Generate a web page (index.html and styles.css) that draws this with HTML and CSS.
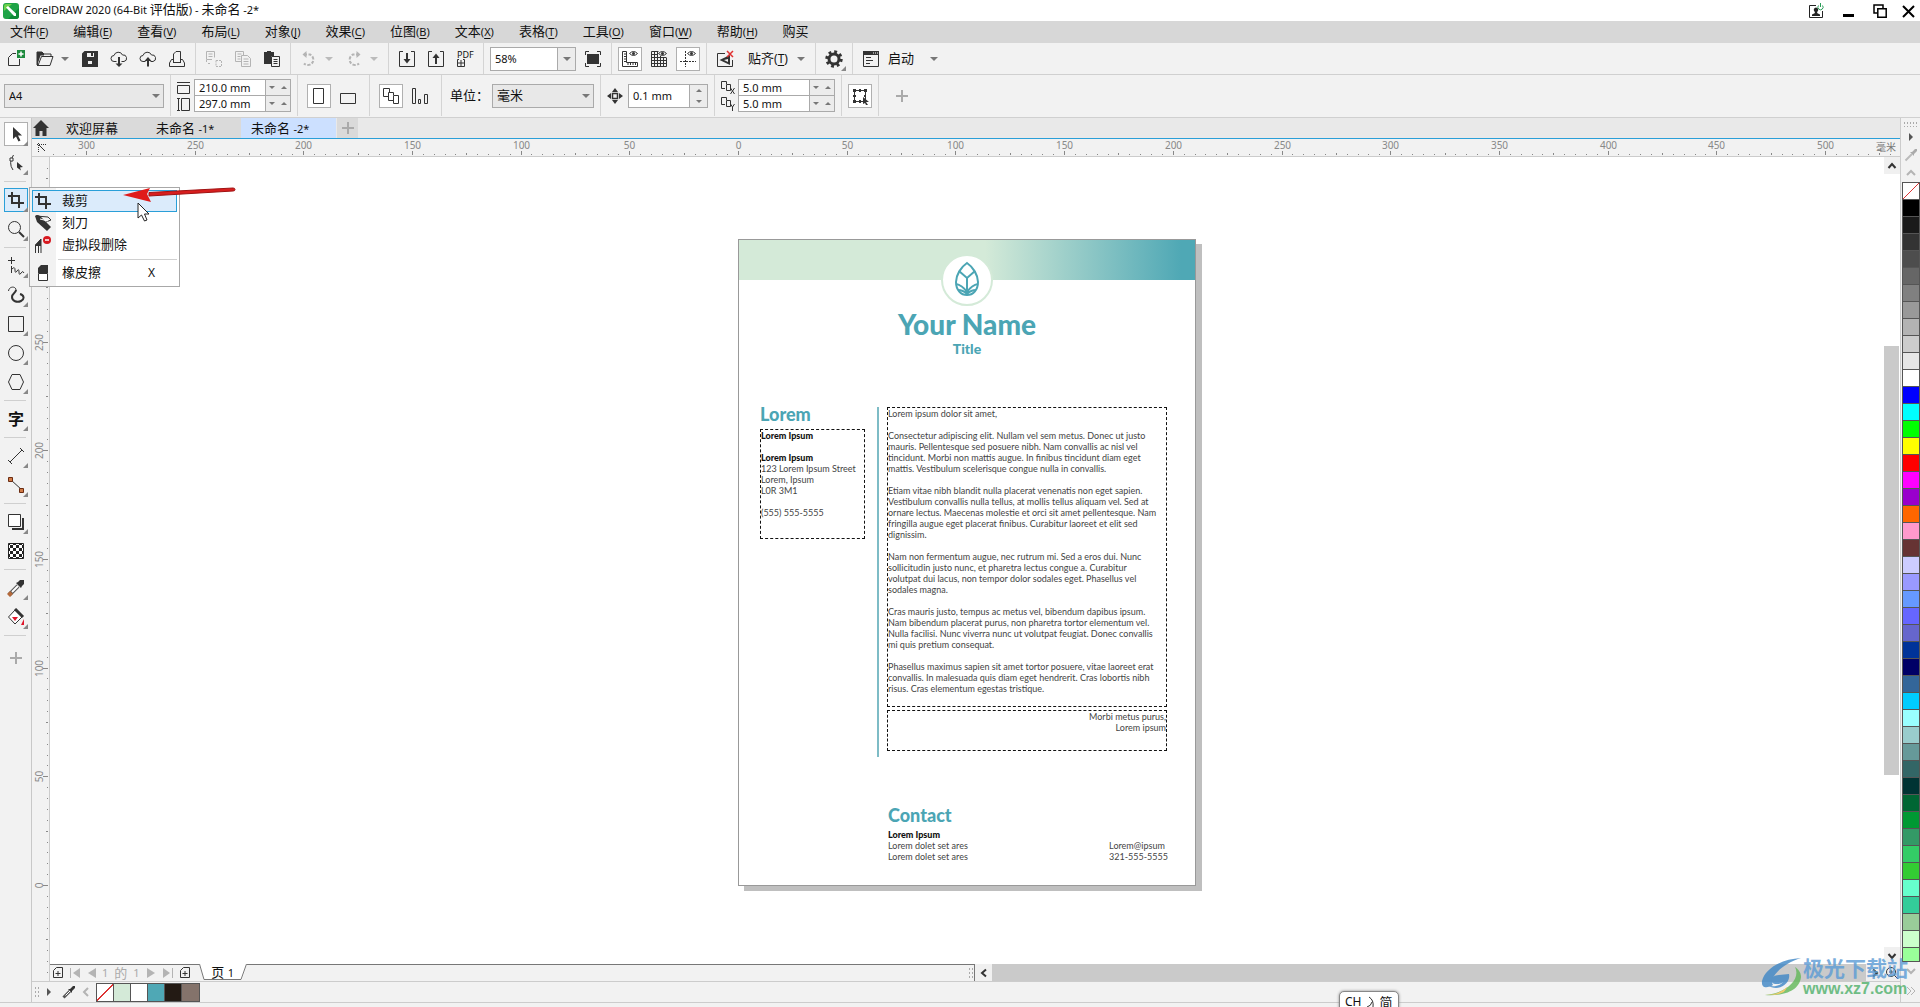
FILE: index.html
```html
<!DOCTYPE html>
<html lang="zh-CN">
<head>
<meta charset="utf-8">
<title>CorelDRAW 2020 (64-Bit 评估版) - 未命名 -2*</title>
<link rel="stylesheet" href="styles.css">
</head>
<body>
<header class="titlebar">
  <svg class="app-logo" viewBox="0 0 16 16" width="16" height="16"><rect width="16" height="16" rx="3" fill="#1fa347"/><path d="M16 5v8a3 3 0 0 1-3 3H5z" fill="#0f8a38"/><path d="M1 3a2 2 0 0 1 2-2h6L1 8z" fill="#6fd04b"/><path d="M3 4.500 5 3l8 7.500v2.500h-2z" fill="#fff"/></svg>
  <h1 class="app-title">CorelDRAW 2020 (64-Bit <span class="zh">评估版</span>) - <span class="zh">未命名</span> -2*</h1>
  <div class="window-buttons">
    <button class="win-btn" aria-label="账户"><svg width="16" height="16" viewBox="0 0 16 16"><path d="M8 2.500H1.500v12h13V8" fill="none" stroke="#222"/><path d="M8 4.500a2.300 2.300 0 0 1 1.500 4l-.5 1.500 3 1.500v1.500H4v-1.500L7 10l-.5-1.500A2.300 2.300 0 0 1 8 4.500z" fill="#222"/><path d="M10.500 2.500a2.600 2.600 0 1 0 4 0M12.500 0v4" fill="none" stroke="#2a9d57"/></svg></button>
    <button class="win-btn" aria-label="最小化"><svg width="16" height="16" viewBox="0 0 16 16"><path d="M3 11h11v3H3z"/></svg></button>
    <button class="win-btn" aria-label="还原"><svg width="16" height="16" viewBox="0 0 16 16" fill="none" stroke="#000" stroke-width="1.500"><path d="M5.500 10H2V2h9v3.500"/><path d="M5.800 5.800h8.400v8.400H5.800z"/></svg></button>
    <button class="win-btn" aria-label="关闭"><svg width="16" height="16" viewBox="0 0 16 16"><path d="M3 3l11 11M14 3 3 14" stroke="#000" stroke-width="2"/></svg></button>
  </div>
</header>

<nav class="menubar">
  <button>文件<span class="key">(<u>F</u>)</span></button>
  <button>编辑<span class="key">(<u>E</u>)</span></button>
  <button>查看<span class="key">(<u>V</u>)</span></button>
  <button>布局<span class="key">(<u>L</u>)</span></button>
  <button>对象<span class="key">(<u>J</u>)</span></button>
  <button>效果<span class="key">(<u>C</u>)</span></button>
  <button>位图<span class="key">(<u>B</u>)</span></button>
  <button>文本<span class="key">(<u>X</u>)</span></button>
  <button>表格<span class="key">(<u>T</u>)</span></button>
  <button>工具<span class="key">(<u>O</u>)</span></button>
  <button>窗口<span class="key">(<u>W</u>)</span></button>
  <button>帮助<span class="key">(<u>H</u>)</span></button>
  <button>购买</button>
</nav>

<div class="toolbar">
  <button class="tool" aria-label="新建"><svg viewBox="0 0 18 18" width="18" height="18"><path d="M9 3.500H5.500l-4 4v8h11V9" class="ln"/><path d="M10 0h8v8h-8z" fill="#1d8a3d"/><path d="M14 1.500v5M11.500 4h5" stroke="#fff" stroke-width="1.500"/></svg></button>
  <div class="split">
    <button class="tool" aria-label="打开"><svg viewBox="0 0 18 18" width="18" height="18"><path d="M1 15V2h5l2 2h7v2.500" class="ln"/><path d="M2 15.500 5.500 6.500h11.500L14 15.500z" class="ln"/><path d="M1 2h5l2 2v1.500H4.500L2 13v3H1z" class="fl"/></svg></button>
    <button class="drop" aria-label="打开最近"><i class="caret"></i></button>
  </div>
  <button class="tool" aria-label="保存"><svg viewBox="0 0 18 18" width="18" height="18"><path d="M3.500 1H17v16H1V3.500zM6 3v4h7V3zM7 11h4v3H7z" class="fl" fill-rule="evenodd"/><path d="M10 3h2v3h-2z" class="fl"/></svg></button>
  <button class="tool" aria-label="从云端打开"><svg viewBox="0 0 18 18" width="18" height="18"><path d="M6.500 11.500H4a3 3 0 0 1 0-6A4.500 4.500 0 0 1 12.500 5a3.200 3.200 0 0 1 1.500 6.500h-2.500" class="ln"/><path d="M9 7v8" class="ln2"/><path d="M5.500 13.500h7L9 17z" class="fl"/></svg></button>
  <button class="tool" aria-label="保存到云端"><svg viewBox="0 0 18 18" width="18" height="18"><path d="M6.500 11.500H4a3 3 0 0 1 0-6A4.500 4.500 0 0 1 12.500 5a3.200 3.200 0 0 1 1.500 6.500h-2.500" class="ln"/><path d="M9 10v6.500" class="ln2"/><path d="M5.500 11h7L9 7z" class="fl"/></svg></button>
  <button class="tool" aria-label="打印"><svg viewBox="0 0 18 18" width="18" height="18"><path d="M5.500 12.500V4L8 1.500h4.500v11" class="ln"/><path d="M5 9.500H3.500l-2 3.500v3.500h15V13l-2-3.500H13M5 12.500h8" class="ln"/></svg></button>
  <hr class="sep">
  <button class="tool off" aria-label="剪切"><svg viewBox="0 0 18 18" width="18" height="18"><path d="M7 9.500H1.500v-8h8v6" class="ln"/><path d="M3.500 4h4M3.500 6.500h4" class="ln"/><path d="M1.500 10v3M3 13.500h3M11 10.500h5.500v6H11z" class="ln" stroke-dasharray="2 1"/></svg></button>
  <button class="tool off" aria-label="复制"><svg viewBox="0 0 18 18" width="18" height="18"><path d="M7 11.500H1.500v-10h8V5M3.500 4h4M3.500 6.500h3M3.500 9h3M7.500 5.500h6l3 3v8h-9zM9.500 9h5M9.500 11.500h5M9.500 14h5" class="ln"/></svg></button>
  <button class="tool" aria-label="粘贴"><svg viewBox="0 0 18 18" width="18" height="18"><path d="M1 2h3V1h4v1h3v4H8v8H1z" class="fl"/><path d="M8.500 6.500h8v10h-8zM10.500 9.500h4M10.500 11.500h4M10.500 13.500h4" class="ln"/></svg></button>
  <hr class="sep">
  <div class="split">
    <button class="tool off" aria-label="撤消"><svg viewBox="0 0 18 18" width="18" height="18"><path d="M4 4.500h6a5.500 5.500 0 1 1-6 9" class="ln2" stroke-dasharray="3 1.500"/><path d="M6.500 1v7L2.500 4.500z" class="fl"/></svg></button>
    <button class="drop off" aria-label="撤消列表"><i class="caret"></i></button>
  </div>
  <div class="split">
    <button class="tool off" aria-label="重做"><svg viewBox="0 0 18 18" width="18" height="18"><path d="M14 4.500H8a5.500 5.500 0 1 0 6 9" class="ln2" stroke-dasharray="3 1.500"/><path d="M11.500 1v7l4-3.500z" class="fl"/></svg></button>
    <button class="drop off" aria-label="重做列表"><i class="caret"></i></button>
  </div>
  <hr class="sep">
  <button class="tool" aria-label="导入"><svg viewBox="0 0 18 18" width="18" height="18"><path d="M5 1.500H1.500v15h15v-15H13" class="ln"/><path d="M9 3v8" class="ln2"/><path d="M5.500 9h7L9 13.500z" class="fl"/></svg></button>
  <button class="tool" aria-label="导出"><svg viewBox="0 0 18 18" width="18" height="18"><path d="M5 1.500H1.500v15h15v-15H13" class="ln"/><path d="M9 6v8" class="ln2"/><path d="M5.500 8h7L9 3.500z" class="fl"/></svg></button>
  <button class="tool pdf" aria-label="发布为 PDF"><span>PDF</span><svg viewBox="0 0 8 8" width="8" height="8"><path d="M2 .5H.5v7h7v-7H6M4 1v6M1 4h6" class="ln"/></svg></button>
  <hr class="sep">
  <div class="combo zoom"><input type="text" value="58%" aria-label="缩放级别"><button aria-label="缩放列表"><i class="caret"></i></button></div>
  <button class="tool" aria-label="全屏预览"><svg viewBox="0 0 18 18" width="18" height="18"><path d="M3 4h12v10H3z" class="fl"/><path d="M1.500 5V1.500H5M13 1.500h3.500V5M1.500 13v3.500H5M13 16.500h3.500V13" class="ln"/></svg></button>
  <hr class="sep">
  <button class="tool on" aria-label="显示标尺"><svg viewBox="0 0 18 18" width="18" height="18"><path d="M1.500 1.500h4v11h11v4h-15zM5 4H3M5 6.500H3M5 9H3M5 11.500H3M7 13v2M9.500 13v2M12 13v2M14.500 13v2" class="ln"/><path d="M8.500 3.500q4-4 8 0q-4 4-8 0z" class="ln"/><circle cx="12.500" cy="3.500" r="1.500" class="fl"/></svg></button>
  <button class="tool" aria-label="显示网格"><svg viewBox="0 0 18 18" width="18" height="18"><path d="M1.500 1.500h7M1.500 1.500v15h15v-9M4.500 2v14M7.500 2v14M10.500 6v10M13.500 7v9M2 4.500h6M2 7.500h14M2 10.500h14M2 13.500h14" class="ln"/><path d="M8.500 3.500q4-4 8 0q-4 4-8 0z" class="ln"/><circle cx="12.500" cy="3.500" r="1.500" class="fl"/></svg></button>
  <button class="tool on" aria-label="显示辅助线"><svg viewBox="0 0 18 18" width="18" height="18"><path d="M6.500 1v16M1 11.500h16" class="ln" stroke-dasharray="2 1"/><path d="M8.500 3.500q4-4 8 0q-4 4-8 0z" class="ln"/><circle cx="12.500" cy="3.500" r="1.500" class="fl"/></svg></button>
  <hr class="sep">
  <button class="tool" aria-label="关闭贴齐"><svg viewBox="0 0 18 18" width="18" height="18"><path d="M9 3.500H1.500v13h15V10" class="ln"/><path d="M14 5v10L3.500 10z" class="fl"/><path d="M12 9v3l-4-2z" fill="#f2f2f2"/><path d="M11 1l6 6M17 1l-6 6" stroke="#e03030" stroke-width="1.500"/></svg></button>
  <button class="text-tool"><span class="zh">贴齐</span>(<u>T</u>)</button>
  <button class="drop snug" aria-label="贴齐选项"><i class="caret"></i></button>
  <hr class="sep">
  <button class="tool fly" aria-label="选项"><svg viewBox="0 0 18 18" width="18" height="18"><circle cx="9" cy="9" r="5" fill="none" stroke="#333" stroke-width="3"/><circle cx="9" cy="9" r="7.200" fill="none" stroke="#333" stroke-width="3" stroke-dasharray="2.800 2.850"/></svg></button>
  <hr class="sep">
  <button class="tool" aria-label="应用程序启动器"><svg viewBox="0 0 18 18" width="18" height="18"><path d="M1.500 1.500h15v15h-15z" class="ln"/><path d="M1 1h16v4H1z" class="fl"/><path d="M4 7.500h5M4 10.500h7M4 13.500h4" class="ln"/><path d="M11 3h1M13 3h1M15 3h1" stroke="#fff"/></svg></button>
  <button class="text-tool launch-label"><span class="zh">启动</span></button>
  <button class="drop launch" aria-label="启动列表"><i class="caret"></i></button>
</div>

<div class="toolbar property">
  <div class="select paper"><select aria-label="页面大小"><option>A4</option></select><i class="caret"></i></div>
  <hr class="sep">
  <div class="dims">
    <svg viewBox="0 0 13 32" width="13" height="32"><path d="M0 2.500h13M.5 5.500h12v8H.5zM4.500 18.500h8v12h-8zM1.500 18v13M0 18.500h3M0 30.500h3" class="ln"/></svg>
    <div class="stack">
      <div class="spin"><input type="text" value="210.0 mm" aria-label="页面宽度"><button aria-label="宽度微调"><i class="caret small"></i><i class="caret small up"></i></button></div>
      <div class="spin"><input type="text" value="297.0 mm" aria-label="页面高度"><button aria-label="高度微调"><i class="caret small"></i><i class="caret small up"></i></button></div>
    </div>
  </div>
  <hr class="sep">
  <div class="pair">
    <button class="tool on" aria-label="纵向"><svg viewBox="0 0 18 18" width="18" height="18"><path d="M3.500 1.500h10v15h-10z" class="ln"/></svg></button>
    <button class="tool" aria-label="横向"><svg viewBox="0 0 18 18" width="18" height="18"><path d="M1.500 6.500h15v10h-15z" class="ln"/></svg></button>
  </div>
  <hr class="sep">
  <div class="pair">
    <button class="tool on" aria-label="所有页面"><svg viewBox="0 0 18 18" width="18" height="18"><path d="M6 9.500H1.500v-8h6V5M11 13.500H6.500v-8h5V8M11.500 8.500h5v8h-5z" class="ln"/></svg></button>
    <button class="tool" aria-label="当前页面"><svg viewBox="0 0 18 18" width="18" height="18"><path d="M1.500 1.500h3v15h-3zM7.500 12.500h2v4h-2zM13.500 7.500h3v9h-3z" class="ln"/></svg></button>
  </div>
  <hr class="sep">
  <label class="unit-label" for="unit">单位：</label>
  <div class="select unit"><select id="unit"><option>毫米</option></select><i class="caret"></i></div>
  <hr class="sep">
  <div class="nudge">
    <svg viewBox="0 0 16 16" width="16" height="16"><path d="M5.500 5.500h5v5h-5z" fill="none" stroke="#333" stroke-width="1.500"/><path d="M8 0l3 4H5zM8 16l3-4H5zM0 8l4-3v6zM16 8l-4-3v6z" class="fl"/></svg>
    <div class="combo step"><input type="text" value="0.1 mm" aria-label="微调距离"><button aria-label="微调"><i class="caret small up"></i><i class="caret small"></i></button></div>
  </div>
  <hr class="sep">
  <div class="dims dup">
    <svg viewBox="0 0 15 32" width="15" height="32"><path d="M4 8.500H.5v-7h5V4M5.500 4.500h4v6h-4zM9.500 8l4 6M13.500 8l-4 6M4 24.500H.5v-7h5V20M5.500 20.500h4v6h-4zM9.500 24l2 3 2-3M11.500 27v4" class="ln"/></svg>
    <div class="stack">
      <div class="spin"><input type="text" value="5.0 mm" aria-label="再制距离 X"><button aria-label="X 微调"><i class="caret small"></i><i class="caret small up"></i></button></div>
      <div class="spin"><input type="text" value="5.0 mm" aria-label="再制距离 Y"><button aria-label="Y 微调"><i class="caret small"></i><i class="caret small up"></i></button></div>
    </div>
  </div>
  <hr class="sep">
  <button class="tool on" aria-label="视为已填充"><svg viewBox="0 0 18 18" width="18" height="18"><path d="M3.500 3.500h11v11h-11z" class="ln"/><path d="M2 2h3v3H2zM8 2h2v3H8zM13 2h3v3h-3zM2 8h3v2H2zM2 13h3v3H2zM8 13h2v3H8zM13 8h2v2h-2zM12 10l6 5h-3l2 3-2 0-1-2-2 1z" class="fl"/></svg></button>
  <hr class="sep">
  <div class="pair custom"><button class="tool" aria-label="自定义"><svg viewBox="0 0 18 18" width="18" height="18"><path d="M9 3v12M3 9h12" stroke="#aaa" stroke-width="2"/></svg></button></div>
</div>

<div class="workspace">
  <aside class="toolbox">
    <button class="tool on fly" aria-label="选择"><svg viewBox="0 0 18 18" width="18" height="18"><path d="M6 2v12l3-2.500 2.500 5 2-1-2.500-5h4z" class="fl"/></svg></button>
    <button class="tool fly" aria-label="形状"><svg viewBox="0 0 18 18" width="18" height="18"><path d="M6.500 1Q1 9 6 16" class="ln"/><path d="M3 4h3v3H3z" fill="#fff" class="ln"/><path d="M10 8l6 5-3 .5 1 3-4-3z" class="fl"/></svg></button>
    <hr class="rule">
    <div class="flyout-anchor">
      <button class="tool hot fly" aria-label="裁剪工具"><svg viewBox="0 0 18 18" width="18" height="18"><path d="M5 1v11h12M1 5h11v12" class="ln2"/></svg></button>
      <div class="flyout" role="menu">
        <button class="item hot" role="menuitem"><svg viewBox="0 0 18 18" width="18" height="18"><path d="M5 1v11h12M1 5h11v12" class="ln2"/></svg><span>裁剪</span></button>
        <button class="item" role="menuitem"><svg viewBox="0 0 18 18" width="18" height="18"><path d="M2 2l12 1 3 3-5 2" class="ln"/><path d="M1 2q2-2 5 0l11 11-4 4L3 8z" class="fl"/><path d="M6 5l8 2" stroke="#fff"/></svg><span>刻刀</span></button>
        <button class="item" role="menuitem"><svg viewBox="0 0 18 18" width="18" height="18"><path d="M1.500 17V9L7 3v14M4.500 9v8M1 9.500h6" class="ln"/><path d="M1 9l6-6v6z" class="fl"/><circle cx="13" cy="4" r="4" fill="#d71920"/><path d="M11 4h4" stroke="#fff" stroke-width="1.500"/></svg><span>虚拟段删除</span></button>
        <hr class="item-rule">
        <button class="item" role="menuitem"><svg viewBox="0 0 18 18" width="18" height="18"><path d="M4 9V4l3-3h7v8z" class="fl"/><path d="M4.500 9.500h9v7h-9z" fill="#fff" class="ln"/></svg><span>橡皮擦</span><kbd>X</kbd></button>
        <svg class="pointer-arrow" viewBox="0 0 118 20" width="118" height="20"><path d="M26 8.500 110 4q2 0 2 1.500T110 7L26 12z" fill="#d81e1e" stroke="#a01212"/><path d="M0 11 27 4l-3 6 4 8z" fill="#e01b1b"/></svg>
        <svg class="cursor" viewBox="0 0 14 20" width="14" height="20"><path d="M1 1v15l3.500-3 3 6 2.500-1-2.500-6H12z" fill="#fff" stroke="#222"/></svg>
      </div>
    </div>
    <button class="tool fly" aria-label="缩放"><svg viewBox="0 0 18 18" width="18" height="18"><circle cx="7.500" cy="7.500" r="6" class="ln"/><path d="M12 12l5 5" class="ln2"/></svg></button>
    <hr class="rule">
    <button class="tool fly" aria-label="手绘"><svg viewBox="0 0 18 18" width="18" height="18"><path d="M4.500 0v7M1 3.500h7M4.500 9v7M5 12q3-3 3 1t2 1 2 1 2 1 3 0" class="ln"/></svg></button>
    <button class="tool fly" aria-label="艺术笔"><svg viewBox="0 0 18 18" width="18" height="18"><path d="M1.500 5C2 0 9 0 9 4" class="ln"/><path d="M9 4c0 3-4 3-4 7s5 6 9 4 3-6-1-7" class="ln2"/></svg></button>
    <button class="tool fly" aria-label="矩形"><svg viewBox="0 0 18 18" width="18" height="18"><path d="M1.500 1.500h15v15h-15z" class="ln"/></svg></button>
    <button class="tool fly" aria-label="椭圆形"><svg viewBox="0 0 18 18" width="18" height="18"><circle cx="9" cy="9" r="7.500" class="ln"/></svg></button>
    <button class="tool fly" aria-label="多边形"><svg viewBox="0 0 18 18" width="18" height="18"><path d="M5 1.500h8L16.500 9 13 16.500H5L1.500 9z" class="ln"/></svg></button>
    <hr class="rule">
    <button class="tool fly glyph" aria-label="文本">字</button>
    <hr class="rule">
    <button class="tool fly" aria-label="平行度量"><svg viewBox="0 0 18 18" width="18" height="18"><path d="M3 15 15 3M1 13l4 4M13 1l4 4" class="ln"/></svg></button>
    <button class="tool fly" aria-label="连接器"><svg viewBox="0 0 18 18" width="18" height="18"><path d="M4 4l11 10" class="ln"/><path d="M1.500 1.500h4v4h-4zM12.500 12.500h4v4h-4z" fill="#d07a45" stroke="#6b2c12"/></svg></button>
    <hr class="rule">
    <button class="tool fly" aria-label="阴影"><svg viewBox="0 0 18 18" width="18" height="18"><path d="M1.500 1.500h12v12h-12z" fill="#fff" class="ln"/><path d="M5 16h11V5" class="ln2"/></svg></button>
    <button class="tool" aria-label="透明度"><svg viewBox="0 0 18 18" width="18" height="18"><defs><pattern id="chk" width="6" height="6" patternUnits="userSpaceOnUse"><path d="M0 0h6v6H0z" fill="#fff"/><path d="M0 0h3v3H0zM3 3h3v3H3z" fill="#222"/></pattern></defs><path d="M1.500 1.500h15v15h-15z" fill="url(#chk)" stroke="#222"/></svg></button>
    <hr class="rule">
    <button class="tool fly" aria-label="颜色滴管"><svg viewBox="0 0 18 18" width="18" height="18"><path d="M2 16 11 7" stroke="#555" stroke-width="4"/><path d="M5 13l6-6" stroke="#fff" stroke-width="2"/><path d="M1.500 16.500l3-3" stroke="#b4693a" stroke-width="4"/><path d="M9 4l2-1 2-2 4 0 0 4-2 2-1 2z" class="fl"/></svg></button>
    <button class="tool fly" aria-label="交互式填充"><svg viewBox="0 0 18 18" width="18" height="18"><path d="M1.500 9 8 2l7 7-7 7z" fill="#fff" class="ln"/><path d="M8 1l8 8" stroke="#333" stroke-width="3"/><path d="M5 9h6l-3 4z" fill="#e0162b"/><path d="M17 11v6h-3z" fill="#e0162b"/></svg></button>
    <hr class="rule">
    <button class="tool add-tool" aria-label="快速自定义"><svg viewBox="0 0 18 18" width="18" height="18"><path d="M9 3v12M3 9h12" stroke="#aaa" stroke-width="2"/></svg></button>
  </aside>

  <main class="document">
    <div class="tabs">
      <button class="home" aria-label="主页"><svg viewBox="0 0 18 18" width="18" height="18"><path d="M9 1l8 8h-2.500v8h-4v-5h-3v5h-4V9H1z" class="fl"/></svg></button>
      <button class="tab welcome">欢迎屏幕</button>
      <button class="tab">未命名 <span class="key">-1*</span></button>
      <button class="tab active">未命名 <span class="key">-2*</span></button>
      <button class="add" aria-label="新建文档"><svg viewBox="0 0 12 12" width="12" height="12"><path d="M6 0v12M0 6h12" stroke="#aaa" stroke-width="2"/></svg></button>
    </div>
    <div class="ruler-top">
      <svg class="origin" viewBox="0 0 18 17" width="18" height="17"><path d="M5 5.500h9M6.500 4v9" class="ln" stroke-dasharray="1 1"/><path d="M7 6l6 6" class="ln"/></svg>
      <svg class="scale" id="hruler" height="17"></svg>
      <span class="unit-name">毫米</span>
    </div>
    <div class="stage">
      <svg class="ruler-left" id="vruler" width="18"></svg>
      <div class="view">
        <div class="canvas">
          <article class="sheet">
            <div class="band"><svg class="emblem" viewBox="0 0 52 52" width="52" height="52"><circle cx="26" cy="26" r="25" fill="#fff" stroke="#d4ead8" stroke-width="2"/><g fill="none" stroke="#4ba5b4" stroke-width="2"><path d="M26 9c-6 4-11 12-11 19 0 8 5 13 11 13s11-5 11-13c0-7-5-15-11-19z"/><path d="M18 17l8 7 8-7M26 24v15M15 30q6 1 11 8 5-7 11-8M17 36q5 0 9 4 4-4 9-4"/></g></svg></div>
            <h2 class="name">Your Name</h2>
            <p class="role">Title</p>
            <div class="letter">
              <section class="side">
                <h3>Lorem</h3>
                <div class="frame address"><b>Lorem Ipsum</b>

<b>Lorem Ipsum</b>
123 Lorem Ipsum Street
Lorem, Ipsum
L0R 3M1

(555) 555-5555</div>
              </section>
              <section class="main">
                <div class="frame text">Lorem ipsum dolor sit amet,

Consectetur adipiscing elit. Nullam vel sem metus. Donec ut justo
mauris. Pellentesque sed posuere nibh. Nam convallis ac nisl vel
tincidunt. Morbi non mattis augue. In finibus tincidunt diam eget
mattis. Vestibulum scelerisque congue nulla in convallis.

Etiam vitae nibh blandit nulla placerat venenatis non eget sapien.
Vestibulum convallis nulla tellus, at mollis tellus aliquam vel. Sed at
ornare lectus. Maecenas molestie et orci sit amet pellentesque. Nam
fringilla augue eget placerat finibus. Curabitur laoreet et elit sed
dignissim.

Nam non fermentum augue, nec rutrum mi. Sed a eros dui. Nunc
sollicitudin justo nunc, et pharetra lectus congue a. Curabitur
volutpat dui lacus, non tempor dolor sodales eget. Phasellus vel
sodales magna.

Cras mauris justo, tempus ac metus vel, bibendum dapibus ipsum.
Nam bibendum placerat purus, non pharetra tortor elementum vel.
Nulla facilisi. Nunc viverra nunc ut volutpat feugiat. Donec convallis
mi quis pretium consequat.

Phasellus maximus sapien sit amet tortor posuere, vitae laoreet erat
convallis. In malesuada quis diam eget hendrerit. Cras lobortis nibh
risus. Cras elementum egestas tristique.</div>
                <div class="frame sign">Morbi metus purus,
Lorem ipsum</div>
              </section>
            </div>
            <footer class="contact">
              <h3>Contact</h3>
              <div class="contact-row">
                <p><b>Lorem Ipsum</b>
Lorem dolet set ares
Lorem dolet set ares</p>
                <p>Lorem@ipsum
321-555-5555</p>
              </div>
            </footer>
          </article>
        </div>
        <div class="vscroll">
          <button aria-label="向上滚动"><svg viewBox="0 0 10 10" width="10" height="10"><path d="M1.500 7 5 3l3.500 4" class="ln2"/></svg></button>
          <div class="track"><div class="thumb"></div></div>
          <button aria-label="向下滚动"><svg viewBox="0 0 10 10" width="10" height="10"><path d="M1.500 3 5 7l3.500-4" class="ln2"/></svg></button>
        </div>
        <div class="pagebar">
          <div class="pages">
            <button class="nav" aria-label="前面添加页"><svg viewBox="0 0 10 12" width="10" height="12"><path d="M3.500.5h6v10h-9v-7zM5 4v5M2.500 6.500h5" class="ln"/></svg></button>
            <button class="nav off" aria-label="首页"><svg viewBox="0 0 10 10" width="10" height="10"><path d="M.5 0v10" class="ln"/><path d="M10 0v10L3 5z" class="fl"/></svg></button>
            <button class="nav off" aria-label="上一页"><svg viewBox="0 0 10 10" width="10" height="10"><path d="M9 0v10L1 5z" class="fl"/></svg></button>
            <span class="count"><span>1</span><span class="zh">的</span><span>1</span></span>
            <button class="nav off" aria-label="下一页"><svg viewBox="0 0 10 10" width="10" height="10"><path d="M1 0v10l8-5z" class="fl"/></svg></button>
            <button class="nav off" aria-label="末页"><svg viewBox="0 0 10 10" width="10" height="10"><path d="M9.500 0v10" class="ln"/><path d="M0 0v10l7-5z" class="fl"/></svg></button>
            <button class="nav" aria-label="后面添加页"><svg viewBox="0 0 10 12" width="10" height="12"><path d="M3.500.5h6v10h-9v-7zM5 4v5M2.500 6.500h5" class="ln"/></svg></button>
            <button class="page-tab"><svg viewBox="0 0 48 17" width="48" height="17"><path d="M0 0h48l-5 16H5z" fill="#fff"/><path d="M.5 0 5 15.500h37L47.500 0" fill="none" stroke="#777"/></svg><span>页 <span class="key">1</span></span></button>
            <i class="grip"></i>
          </div>
          <div class="hscroll">
            <button aria-label="向左滚动"><svg viewBox="0 0 10 10" width="10" height="10"><path d="M7 1.500 3 5l4 3.500" class="ln2"/></svg></button>
            <div class="htrack"></div>
            <button aria-label="向右滚动"><svg viewBox="0 0 10 10" width="10" height="10"><path d="M3 1.500 7 5 3 8.500" class="ln2"/></svg></button>
            <button aria-label="导航器"><svg viewBox="0 0 14 14" width="14" height="14"><circle cx="6" cy="6" r="4.500" class="ln"/><path d="M9 9l4 4M4 6h4M6 4v4" class="ln"/></svg></button>
          </div>
        </div>
      </div>
    </div>
    <div class="doc-palette">
      <i class="grip"></i>
      <button aria-label="文档调色板菜单"><svg viewBox="0 0 6 8" width="6" height="8"><path d="M1 0v8l4-4z" fill="#555"/></svg></button>
      <button aria-label="滴管"><svg viewBox="0 0 14 14" width="14" height="14"><path d="M1.500 12.500 8 6" stroke="#555" stroke-width="3"/><path d="M3.500 10.500 8 6" stroke="#fff"/><path d="M6 4l2 0 3-3 2 0 0 2-3 3 0 2z" class="fl"/></svg></button>
      <button class="off back" aria-label="向前"><svg viewBox="0 0 10 10" width="10" height="10"><path d="M7 1 3 5l4 4" class="ln2"/></svg></button>
      <div class="swatches" id="docSwatches"></div>
    </div>
  </main>

  <aside class="palette">
    <i class="grip wide"></i>
    <button aria-label="调色板菜单"><svg viewBox="0 0 6 8" width="6" height="8"><path d="M1 0v8l4-4z" fill="#555"/></svg></button>
    <button aria-label="调色板滴管"><svg viewBox="0 0 14 14" width="14" height="14"><path d="M1.500 12.500 8 6" stroke="#bbb" stroke-width="2"/><path d="M6 4l2 0 3-3 2 0 0 2-3 3 0 2z" fill="#aaa"/></svg></button>
    <button class="off" aria-label="调色板向上"><svg viewBox="0 0 10 10" width="10" height="10"><path d="M1 7l4-4 4 4" class="ln2"/></svg></button>
    <div class="swatches tall" id="mainSwatches"></div>
    <button class="off" aria-label="调色板向下"><svg viewBox="0 0 10 10" width="10" height="10"><path d="M1 3l4 4 4-4" class="ln2"/></svg></button>
    <button class="off more" aria-label="展开调色板"><svg viewBox="0 0 10 10" width="10" height="10"><path d="M1 1l4 4-4 4M5 1l4 4-4 4" class="ln"/></svg></button>
  </aside>
</div>
<footer class="statusbar"></footer>

<div class="ime">CH <svg viewBox="0 0 10 12" width="10" height="12"><path d="M4 1q5 3 4 10M2 11q4-1 5-5" class="ln"/></svg> <span class="zh">简</span></div>
<div class="site-mark">
  <svg viewBox="0 0 42 40" width="42" height="40"><path d="M40 1C20 2 4 12 1 24c-1 8 6 7 11 4C8 22 18 8 40 1z" fill="#3d86c6"/><path d="M18 18c-8 0-10 8-4 9 8 1 12-5 9-9 3 8-8 14-17 10 12 8 24-2 22-11z" fill="#3d86c6"/><path d="M34 10c6 12-8 26-30 28 12 1 34-1 36-18 0-5-3-8-6-10z" fill="#62b858"/><path d="M4 38q14 0 22-8-2 9-22 8z" fill="#f2c14b"/></svg>
  <div class="site-text"><span class="site-name">极光下载站</span><span class="site-url">www.xz7.com</span></div>
</div>
<script src="script.js"></script>
</body>
</html>
```
FILE: styles.css
```css
* { box-sizing: border-box; }
html, body { height: 100%; margin: 0; }
body {
  display: flex;
  flex-direction: column;
  overflow: hidden;
  position: relative;
  background: #f2f2f2;
  color: #111;
  font-family: "Noto Sans", "Noto Sans CJK SC", sans-serif;
  font-size: 11px;
}
button, input, select { font: inherit; color: inherit; }
button { border: 0; padding: 0; margin: 0; background: none; white-space: nowrap; }
svg { display: block; flex: none; }
h1, h2, h3, p { margin: 0; }
u { text-underline-offset: 2px; }
.zh { font-size: 13px; }
.key { font-size: 11px; }
.ln { fill: none; stroke: #333; }
.ln[fill="#fff"] { fill: #fff; }
.ln2 { fill: none; stroke: #333; stroke-width: 2; }
.fl { fill: #333; }
.off .ln, .off .ln2 { stroke: #b4b4b4; }
.off .fl { fill: #b4b4b4; }

.caret {
  border-left: 4px solid transparent;
  border-right: 4px solid transparent;
  border-top: 4px solid #777;
}
.caret.small { border-width: 3px 3px 0; }
.caret.up { border-top: 0; border-bottom: 3px solid #777; }
.off .caret { border-top-color: #bbb; }

/* title and menu */
.titlebar { display: flex; align-items: center; height: 21px; padding-left: 3px; background: #fff; flex: none; }
.app-title { margin-left: 5px; padding-bottom: 2px; font-size: 11px; font-weight: 400; line-height: 18px; }
.window-buttons { display: flex; margin-left: auto; }
.win-btn { width: 32px; display: flex; justify-content: center; align-items: center; }
.win-btn:last-child { width: 24px; }
.menubar { display: flex; gap: 25px; height: 22px; padding: 0 0 4px 10px; background: #d7d7d7; font-size: 13px; flex: none; }

/* bars */
.toolbar {
  display: flex;
  align-items: center;
  gap: 5px;
  height: 32px;
  padding-left: 4px;
  border-bottom: 1px solid #d0d0d0;
  flex: none;
}
.tool {
  position: relative;
  display: flex;
  align-items: center;
  justify-content: center;
  width: 24px;
  height: 24px;
  border: 1px solid transparent;
  flex: none;
}
.tool.on { background: #fff; border-color: #b0b0b0; }
.tool.hot { background: #dbebfb; border-color: #2a9fd8; }
.fly::after {
  content: "";
  position: absolute;
  right: -1px;
  bottom: -1px;
  border-left: 5px solid transparent;
  border-bottom: 5px solid #888;
}
.sep { width: 3px; margin: 0; border: 0; background: linear-gradient(90deg, transparent 1px, #d4d4d4 1px, #d4d4d4 2px, transparent 2px); flex: none; align-self: stretch; }
.split { display: flex; }
.drop { display: flex; align-items: center; justify-content: center; width: 16px; height: 24px; }
.text-tool { margin-left: 6px; padding-bottom: 2px; font-size: 12px; }
.text-tool.launch-label { margin-left: 0; }
.launch { margin-left: 7px; }
.pdf { flex-direction: column; align-items: flex-start; padding-left: 3px; font-size: 9px; line-height: 9px; }
.combo, .spin { display: flex; border: 1px solid #aaa; background: #fff; }
.combo { height: 24px; }
.combo input, .spin input { width: 0; flex: 1; min-width: 0; border: 0; padding: 0 4px; background: none; outline: 0; }
.combo button, .spin button { display: flex; align-items: center; justify-content: center; background: #ececec; border-left: 1px solid #aaa; }
.zoom { width: 86px; }
.zoom button { width: 18px; }
.step { width: 80px; }
.step button { width: 18px; flex-direction: column; gap: 8px; }
.property { height: 43px; padding-bottom: 1px; }
.select { position: relative; height: 24px; }
.select select {
  appearance: none;
  width: 100%;
  height: 24px;
  padding: 0 4px;
  border: 1px solid #aaa;
  border-radius: 0;
  background: #e8e8e8;
}
.select .caret { position: absolute; right: 4px; top: 10px; pointer-events: none; }
.paper { width: 160px; }
.unit { width: 102px; }
.unit select, .unit-label { font-size: 13px; }
.unit select { padding-bottom: 2px; }
.unit-label { margin-left: 2px; padding-bottom: 2px; width: 37px; white-space: nowrap; }
.dims { display: flex; gap: 4px; align-items: center; }
.dup { gap: 2px; }
.stack { display: flex; flex-direction: column; }
.spin { width: 97px; height: 17px; }
.spin + .spin { border-top: 0; height: 16px; }
.spin button { width: 25px; gap: 6px; }
.pair { display: flex; gap: 5px; padding: 0 3px; }
.custom { padding-left: 5px; }
.nudge { display: flex; align-items: center; gap: 5px; }

/* workspace */
.workspace { flex: 1; min-height: 0; display: grid; grid-template-columns: 31px minmax(0, 1fr) 20px; }
.toolbox { display: flex; flex-direction: column; gap: 5px; padding: 4px 0 0 4px; }
.rule { width: 22px; height: 3px; margin: 0; border: 0; background: linear-gradient(transparent 1px, #cfcfcf 1px, #cfcfcf 2px, transparent 2px); flex: none; }
.glyph { font-size: 16px; font-weight: 700; line-height: 20px; }
.add-tool { margin-top: 4px; }
.flyout-anchor { position: relative; }
.flyout {
  position: absolute;
  left: 25px;
  top: -1px;
  z-index: 5;
  width: 151px;
  padding: 2px;
  border: 1px solid #a8a8a8;
  background: linear-gradient(90deg, #f2f2f2 26px, #fff 26px);
  font-size: 13px;
}
.item { display: flex; align-items: center; width: 100%; height: 22px; gap: 10px; padding-left: 1px; border: 1px solid transparent; }
.item > span { padding-bottom: 3px; }
.item.hot { background: #dbebfb; border-color: #2a9fd8; }
.item kbd { font: inherit; font-size: 12px; margin-left: 37px; padding-bottom: 2px; }
.item-rule { height: 1px; margin: 3px 0 2px 26px; border: 0; background: #d0d0d0; }
.pointer-arrow { position: absolute; left: 93px; top: -4px; }
.cursor { position: absolute; left: 107px; top: 14px; }

.document { display: flex; flex-direction: column; min-width: 0; border-left: 1px solid #c8c8c8; }
.tabs { display: flex; height: 21px; border-bottom: 1px solid #2a9fd8; background: #e9e9e9; font-size: 13px; flex: none; }
.tabs > button { background: #dadada; }
.home { width: 20px; }
.tabs > .tab { width: 95px; padding: 0 0 3px 10px; text-align: left; }
.tabs > .welcome { width: 94px; padding-left: 14px; }
.tabs > .active { background: #cce0ff; }
.tabs > .add { display: flex; align-items: center; justify-content: center; width: 21px; margin-left: 1px; }
.ruler-top { display: flex; height: 18px; border-bottom: 1px solid #ccc; flex: none; position: relative; }
.scale { flex: 1; min-width: 0; }
.unit-name { position: absolute; right: 4px; top: 1px; font-size: 10px; line-height: 14px; color: #777; }
.tick { stroke: #888; }
.mark { font-size: 10px; fill: #888; text-anchor: middle; }
.stage { flex: 1; min-height: 0; display: flex; }
.ruler-left { height: 100%; border-right: 1px solid #ccc; }
.view { flex: 1; min-width: 0; display: grid; grid-template-columns: minmax(0, 1fr) 16px; grid-template-rows: minmax(0, 1fr) 17px; background: #fff; }
.canvas { display: flex; justify-content: center; align-items: flex-start; padding-top: 82px; overflow: hidden; }
.vscroll { display: flex; flex-direction: column; min-height: 0; }
.vscroll button { height: 17px; background: #f0f0f0; display: flex; align-items: center; justify-content: center; flex: none; }
.track { flex: 1; display: flex; flex-direction: column; }
.track::before { content: ""; flex: 172; }
.track::after { content: ""; flex: 172; }
.thumb { flex: 429; width: 15px; background: #cacaca; }
.pagebar { grid-column: 1 / 3; display: grid; grid-template-columns: minmax(0, 1fr) minmax(0, 1fr); background: #f2f2f2; }
.pages { display: flex; align-items: center; border-top: 1px solid #777; border-right: 1px solid #777; padding-left: 3px; }
.nav { width: 10px; height: 14px; margin-right: 7px; display: flex; align-items: center; }
.count { display: flex; gap: 6px; align-items: center; color: #aaa; margin: 0 6px 0 -2px; line-height: 14px; height: 14px; }
.page-tab { position: relative; width: 48px; height: 17px; margin: -1px auto 0 2px; font-size: 13px; line-height: 14px; }
.page-tab svg { position: absolute; left: 0; top: 0; }
.page-tab > span { position: relative; display: block; height: 16px; }
.grip { width: 6px; height: 13px; background: radial-gradient(circle, #aaa 1px, transparent 1px) 0 0 / 3px 4px; flex: none; }
.grip.wide { width: 16px; height: 6px; }
.hscroll { display: flex; }
.hscroll button { width: 17px; display: flex; align-items: center; justify-content: center; background: #f0f0f0; }
.htrack { flex: 1; background: #cacaca; }
.doc-palette { display: flex; align-items: center; gap: 10px; height: 21px; padding-left: 2px; border-top: 1px solid #ccc; flex: none; }
.doc-palette .swatches { margin-left: -5px; }
.doc-palette .grip { margin-right: -4px; }
.doc-palette .back { margin-left: -5px; }
.swatches { display: flex; border: 1px solid #555; }
.swatches button { width: 17px; height: 17px; border-right: 1px solid #555; display: block; flex: none; }
.swatches button:last-child { border-right: 0; }
.none { background: linear-gradient(135deg, #fff 48%, #d33 48%, #d33 52%, #fff 52%); }

.palette { display: flex; flex-direction: column; align-items: center; border-left: 1px solid #ccc; padding-top: 3px; min-height: 0; }
.palette > button { display: flex; align-items: center; justify-content: center; width: 100%; height: 18px; flex: none; }
.palette > button:nth-of-type(1) { margin-top: 1px; }
.swatches.tall { flex: 1; min-height: 0; flex-direction: column; width: 18px; overflow: hidden; }
.tall button { width: 16px; border-right: 0; border-bottom: 1px solid #555; }
.palette > .more { height: 22px; }
.statusbar { height: 5px; border-top: 1px solid #ccc; flex: none; }

/* letterhead on the canvas */
.sheet {
  width: 458px;
  border: 1px solid #999;
  background: #fff;
  box-shadow: 6px 5px 0 #bfbfbf;
  color: #444;
  font-family: Lato, sans-serif;
  font-size: 9px;
  line-height: 11px;
  padding-bottom: 23px;
  flex: none;
}
.band { height: 40px; display: flex; justify-content: center; background: linear-gradient(90deg, #d4ead8 54%, #4fa8b5 97%); }
.emblem { margin-top: 14px; }
.name { margin-top: 27px; text-align: center; color: #4ba5b4; font-size: 28px; font-weight: 900; line-height: 34px; }
.role { text-align: center; color: #4ba5b4; font-size: 14px; font-weight: 900; line-height: 16px; }
.letter { display: flex; margin-top: 50px; padding-left: 21px; }
.side { width: 119px; padding-right: 14px; height: 350px; border-right: 2px solid #7ebcc6; }
.sheet h3 { color: #4ba5b4; font-size: 18px; font-weight: 900; line-height: 14px; }
.frame { border: 1px dashed #111; white-space: pre; }
.address { width: 105px; height: 110px; margin-top: 8px; }
.main { margin-left: 8px; width: 280px; }
.text { height: 300px; }
.sign { height: 41px; margin-top: 3px; text-align: right; }
.sheet b { color: #111; font-weight: 900; }
.contact { margin: 51px 0 0 149px; width: 280px; }
.contact-row { display: flex; justify-content: space-between; align-items: flex-end; margin-top: 7px; white-space: pre-line; }

/* overlays */
.ime {
  position: absolute;
  left: 1339px;
  bottom: -6px;
  display: flex;
  gap: 4px;
  align-items: center;
  padding: 2px 5px;
  border: 1px solid #888;
  border-radius: 5px;
  background: #fff;
  box-shadow: 0 0 3px #888;
  font-size: 12px;
  line-height: 16px;
}
.site-mark { position: absolute; right: 12px; bottom: 8px; display: flex; opacity: 0.8; }
.site-text { display: flex; flex-direction: column; }
.site-name { color: #5b9bd5; font-size: 21px; font-weight: 700; line-height: 22px; }
.site-url { color: #4fb06a; font-family: "Liberation Sans", sans-serif; font-size: 16px; font-weight: 700; line-height: 20px; }
```
FILE: script.js
```js
const NS = "http://www.w3.org/2000/svg";
const STEP = 10.87; // screen pixels per 5 mm at 58% zoom

function add(parent, tag, attrs, text) {
  const el = document.createElementNS(NS, tag);
  for (const k in attrs) el.setAttribute(k, attrs[k]);
  if (text !== undefined) el.textContent = text;
  parent.appendChild(el);
}

function horizontalRuler(svg, origin, width) {
  for (let i = -64; i <= 110; i++) {
    const x = Math.round(origin + i * STEP) + 0.5;
    if (x < 2 || x > width) continue;
    const major = i % 10 === 0;
    const top = major ? 12 : i % 5 === 0 ? 14 : 15;
    add(svg, "line", { x1: x, x2: x, y1: top, y2: 16, class: "tick" });
    if (major && x < width - 30) add(svg, "text", { x, y: 10, class: "mark" }, Math.abs(i * 5));
  }
}

function verticalRuler(svg, origin, height) {
  for (let i = -10; i <= 70; i++) {
    const y = Math.round(origin - i * STEP) + 0.5;
    if (y < 2 || y > height) continue;
    const major = i % 10 === 0;
    add(svg, "line", { x1: major ? 11 : i % 5 === 0 ? 14 : 15, x2: 16, y1: y, y2: y, class: "tick" });
    if (major) add(svg, "text", { x: 0, y: 0, class: "mark", transform: `translate(11 ${y}) rotate(-90)` }, Math.abs(i * 5));
  }
}

function swatches(host, colors) {
  for (const c of colors) {
    const b = document.createElement("button");
    b.setAttribute("aria-label", c);
    if (c === "none") b.className = "none";
    else b.style.background = c;
    host.appendChild(b);
  }
}

const sheet = document.querySelector(".sheet").getBoundingClientRect();
const h = document.getElementById("hruler");
const v = document.getElementById("vruler");
const hb = h.getBoundingClientRect();
const vb = v.getBoundingClientRect();
horizontalRuler(h, sheet.left - hb.left, hb.width);
verticalRuler(v, sheet.bottom - vb.top - 1, vb.height);

swatches(document.getElementById("docSwatches"), ["none", "#d4ead8", "#ffffff", "#4fa8b5", "#231a14", "#84736b"]);
swatches(document.getElementById("mainSwatches"), [
  "none", "#000000", "#1a1a1a", "#333333", "#4d4d4d", "#666666", "#808080", "#999999", "#b3b3b3", "#cccccc",
  "#e6e6e6", "#ffffff", "#0000ff", "#00ffff", "#00ff00", "#ffff00", "#ff0000", "#ff00ff", "#9900cc", "#ff6600",
  "#ff99cc", "#663333", "#ccccff", "#9999ff", "#6699ff", "#6666ff", "#6666cc", "#003399", "#000066", "#336699",
  "#00ccff", "#99ffff", "#99cccc", "#669999", "#336666", "#003333", "#006633", "#009933", "#339966", "#33cc66",
  "#33cc33", "#66ffcc", "#33cc99", "#99cc99", "#ccffcc", "#99ff99"
]);
```
